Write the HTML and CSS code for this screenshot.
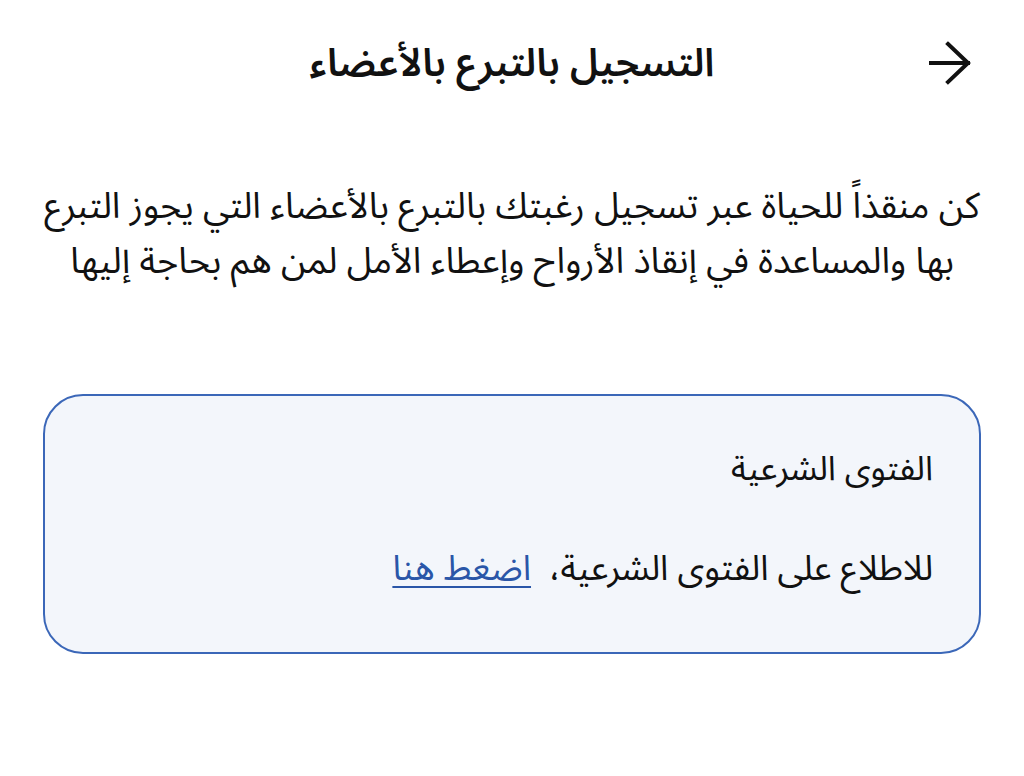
FILE: index.html
```html
<!DOCTYPE html>
<html lang="ar" dir="rtl">
<head>
    <meta charset="UTF-8">
    <meta name="viewport" content="width=device-width, initial-scale=1.0">
    <title>التسجيل بالتبرع بالأعضاء</title>
    <link rel="stylesheet" href="styles.css">
</head>
<body>
    <!-- Header -->
    <div class="top-bar">
        <div class="back-button">
            <svg width="44" height="44" viewBox="0 0 44 44" fill="none" stroke="#111111" stroke-width="4" stroke-linecap="square">
                <path d="M3 22 H40"/>
                <path d="M20 3 L40 22 L20 41"/>
            </svg>
        </div>
        <div class="page-title">التسجيل بالتبرع بالأعضاء</div>
    </div>

    <div class="intro-text">
        كن منقذاً للحياة عبر تسجيل رغبتك بالتبرع بالأعضاء التي يجوز التبرع بها والمساعدة في إنقاذ الأرواح وإعطاء الأمل لمن هم بحاجة إليها
    </div>

    <!-- Fatwa card -->
    <div class="fatwa-card">
        <div class="fatwa-title">الفتوى الشرعية</div>
        <div class="fatwa-text">
            للاطلاع على الفتوى الشرعية، <a class="fatwa-link" href="#">اضغط هنا</a>
        </div>
    </div>
</body>
</html>
```
FILE: styles.css
```css
body {
    font-family: "Noto Sans Arabic", "Noto Sans", "DejaVu Sans", sans-serif;
    margin: 0;
    padding: 0;
    background-color: #ffffff;
    color: #111111;
}
.top-bar {
    position: relative;
    height: 130px;
    display: flex;
    justify-content: center;
    align-items: center;
}
.back-button {
    position: absolute;
    right: 52px;
    top: 41px;
    width: 44px;
    height: 44px;
}
.page-title {
    font-size: 39px;
    font-weight: 600;
    margin-top: -4px;
}
.intro-text {
    padding: 50px 28px 0;
    font-size: 36px;
    line-height: 55px;
    text-align: center;
    height: 214px;
}
.fatwa-card {
    margin: 0 43px;
    height: 260px;
    box-sizing: border-box;
    background-color: #f3f6fb;
    border: 2px solid #3b67b8;
    border-radius: 40px;
    padding: 48px 46px 0;
}
.fatwa-title {
    font-size: 34px;
    line-height: 50px;
    margin-bottom: 50px;
}
.fatwa-text {
    font-size: 35px;
    line-height: 50px;
}
.fatwa-link {
    color: #2a56a8;
    text-decoration: underline;
    text-underline-offset: 6px;
    text-decoration-thickness: 2px;
    margin-right: 9px;
}
```
